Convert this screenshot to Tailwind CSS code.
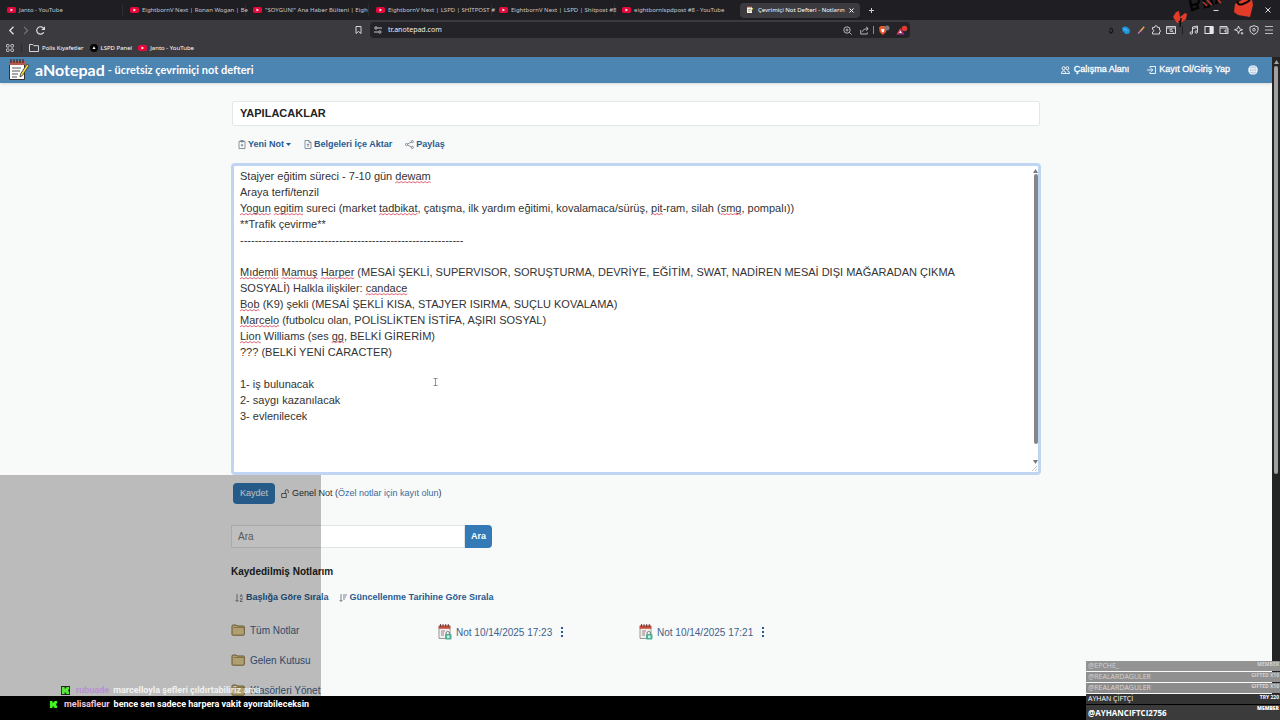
<!DOCTYPE html>
<html lang="tr">
<head>
    <meta charset="UTF-8">
    <meta name="viewport" content="width=device-width, initial-scale=1.0">
    <title>Çevrimiçi Not Defteri</title>
    <script src="https://cdn.jsdelivr.net/npm/@tailwindcss/browser@4"></script>
</head>
<body class="relative flex flex-col h-screen overflow-hidden bg-[#f8faf9] font-['Liberation_Sans',Arial,sans-serif] text-[#333]">

    <!-- Shared icons -->
    <svg class="hidden">
        <symbol id="yt" viewBox="0 0 18 12"><rect width="18" height="12" rx="3.5" fill="#e4083c"/><path d="M7 3l5 3-5 3z" fill="#fff"/></symbol>
        <symbol id="folder" viewBox="0 0 14 12"><path d="M1 2.2C1 1.4 1.400 1 2 1h3l1 1h6.500c.5 0 .8.3.8.8V10.500c0 .4-.3.700-.8.700H1.800c-.5 0-.8-.3-.8-.700z" fill="#ecd694" stroke="#8a7440"/><path d="M2.500 3.500h10.500" fill="none" stroke="#8a7440" stroke-width=".6"/></symbol>
        <symbol id="note" viewBox="0 0 14 16"><path d="M1 2h11v12.500H1z" fill="#f2efef" stroke="#857f80" stroke-width=".8"/><path d="M.700 1.500h11.600v3.300H.700z" fill="#c9503c"/><path d="M2.500 0v3M5 0v3M7.700 0v3M10.300 0v3" stroke="#5b3b38" stroke-width=".9"/><path d="M3 7h4M3 9h3M3 11h3" stroke="#9a8583"/><path d="M8 10V8.500q1.700-2.500 3.500 0V10" fill="none" stroke="#777"/><rect x="7" y="10" width="6.500" height="5.500" rx="1" fill="#4eae96"/><rect x="9" y="11.500" width="2.500" height="2.500" fill="#cdf0e5"/></symbol>
        <symbol id="kick" viewBox="0 0 10 10"><path d="M1 1h3v2h1V2h1V1h3v3H8v2h1v3H6V8H5V7H4v2H1z" fill="#42f51f"/></symbol>
    </svg>

    <!-- Browser tabs -->
    <div class="flex items-center h-5 shrink-0 bg-[#1f1e23] font-['Noto_Sans','Open_Sans',sans-serif] text-[6px] text-[#c8c8cc] whitespace-nowrap">
        <button class="flex items-center gap-[3px] flex-1 max-w-[123px] h-3 pl-[7px] border-r border-[#2d2c31]"><svg class="w-[9px] h-1.5 shrink-0"><use href="#yt"/></svg>Janto - YouTube</button>
        <button class="flex items-center gap-[3px] flex-1 max-w-[123px] h-3 pl-[7px] border-r border-[#2d2c31]"><svg class="w-[9px] h-1.5 shrink-0"><use href="#yt"/></svg>EightbornV Next | Ronan Wogan | Be</button>
        <button class="flex items-center gap-[3px] flex-1 max-w-[123px] h-3 pl-[7px] border-r border-[#2d2c31]"><svg class="w-[9px] h-1.5 shrink-0"><use href="#yt"/></svg>"SOYGUN!" Ana Haber Bülteni | Eigh</button>
        <button class="flex items-center gap-[3px] flex-1 max-w-[123px] h-3 pl-[7px] border-r border-[#2d2c31]"><svg class="w-[9px] h-1.5 shrink-0"><use href="#yt"/></svg>EightbornV Next | LSPD | SHİTPOST #</button>
        <button class="flex items-center gap-[3px] flex-1 max-w-[123px] h-3 pl-[7px] border-r border-[#2d2c31]"><svg class="w-[9px] h-1.5 shrink-0"><use href="#yt"/></svg>EightbornV Next | LSPD | Shitpost #8</button>
        <button class="flex items-center gap-[3px] flex-1 max-w-[123px] h-3 pl-[7px]"><svg class="w-[9px] h-1.5 shrink-0"><use href="#yt"/></svg>eightbornlspdpost #8 - YouTube</button>
        <button class="flex items-center gap-1 flex-1 max-w-[120px] h-[15px] ml-0.5 px-1.5 rounded bg-[#3b3b3f] text-white">
            <svg class="w-2 h-2 shrink-0" viewBox="0 0 8 8"><path d="M1 1h5v6H1z" fill="#f5f0e8"/><path d="M1 1h5" stroke="#b35342"/><path d="M2 3.500h3M2 5h2" stroke="#777" stroke-width=".6"/><path d="M7 2L4.500 6" stroke="#e0c75a"/></svg>
            <span class="flex-1 text-left">Çevrimiçi Not Defteri - Notların</span>
            <svg class="w-[5px] h-[5px] shrink-0" viewBox="0 0 5 5" stroke="#fff" stroke-width="1"><path d="M.500.500l4 4M4.500.500l-4 4"/></svg>
        </button>
        <button class="ml-2 p-px" aria-label="Yeni sekme"><svg class="w-[5px] h-[5px]" viewBox="0 0 5 5" stroke="#d0d0d4" stroke-width="1"><path d="M2.500 0v5M0 2.500h5"/></svg></button>
        <div class="flex items-center gap-5 ml-auto pr-[9px]">
            <svg class="w-1.5 h-1.5" viewBox="0 0 6 6" stroke="#ddd" stroke-width="1"><path d="M.500 3.500h5"/></svg>
            <svg class="w-1.5 h-1.5" viewBox="0 0 6 6" stroke="#ddd" stroke-width="1"><path d="M1 1h4v4H1z" fill="none"/></svg>
            <svg class="w-1.5 h-1.5" viewBox="0 0 6 6" stroke="#ddd" stroke-width="1"><path d="M.500.500l5 5M5.500.500l-5 5"/></svg>
        </div>
    </div>

    <!-- Address bar -->
    <div class="flex items-center h-5 shrink-0 bg-[#3b3b3f] text-[#d5d5d8]">
        <div class="flex items-center flex-1 pl-2 pr-2">
            <svg class="w-[9px] h-[9px]" viewBox="0 0 9 9" fill="none" stroke="#e0e0e2" stroke-width="1.300"><path d="M5.500.800L1.800 4.500l3.700 3.700"/></svg>
            <svg class="w-[9px] h-[9px] ml-1" viewBox="0 0 9 9" fill="none" stroke="#77777c" stroke-width="1.100"><path d="M3 .800l3.700 3.700L3 8.200"/></svg>
            <svg class="w-[9px] h-[9px] ml-1.5" viewBox="0 0 9 9" fill="none" stroke="#e0e0e2" stroke-width="1.200"><path d="M7.700 6.200A3.700 3.700 0 1 1 7.700 2.700M8.400.800v2.700H5.700"/></svg>
            <svg class="w-[7px] h-2 ml-auto" viewBox="0 0 7 8" fill="none" stroke="#d5d5d8"><path d="M1 .500h5v7L3.500 5.500 1 7.500z"/></svg>
        </div>
        <div class="flex items-center w-[540px] h-4 pl-1 rounded bg-[#242328]">
            <svg class="w-2 h-2 shrink-0" viewBox="0 0 8 8" fill="none" stroke="#c5c5c8"><path d="M3.500 2H8M0 6h4"/><circle cx="2" cy="2" r="1.200"/><circle cx="5.800" cy="6" r="1.200"/></svg>
            <input type="text" aria-label="Adres" value="tr.anotepad.com" class="flex-1 min-w-0 pl-1.5 bg-transparent font-['Noto_Sans',sans-serif] text-[7px] text-[#ededf0] outline-none">
            <svg class="w-[9px] h-[9px]" viewBox="0 0 9 9" fill="none" stroke="#c5c5c8" stroke-width=".9"><circle cx="4" cy="4" r="3.200"/><path d="M6.300 6.300l2.300 2.300M4 2.500v3M2.500 4h3"/></svg>
            <svg class="w-[9px] h-[9px] ml-2" viewBox="0 0 9 9" fill="none" stroke="#c5c5c8" stroke-width=".9"><path d="M.700 4v4h6.600V6.500M2.500 5.700Q3 2.700 8 2.700M6 .700l2.200 2L6 4.700"/></svg>
            <div class="w-px h-2 ml-1 bg-[#8a8a8e]"></div>
            <svg class="w-3 h-[11px] ml-1" viewBox="0 0 12 11"><path d="M1 2.500L3 1h3.500l2 1.500L8 7 4.800 10 1.700 7z" fill="#ee5a2e"/><path d="M3 4h3.500l-.7 2.500-1 1-1-1z" fill="#fff"/><circle cx="9" cy="3" r="2.500" fill="#77787c"/></svg>
            <svg class="w-3 h-[11px] ml-1.5 mr-0.5" viewBox="0 0 12 11"><path d="M4.500 3L8.500 9.500H.500z" fill="#a02f8c"/><path d="M4.500 3L.500 9.500l4-2z" fill="#ee4b35"/><path d="M4.500 5.500l1.300 2.500H3.200z" fill="#fff"/><circle cx="8.500" cy="3.500" r="2.800" fill="#dd3c30"/></svg>
        </div>
        <div class="flex items-center justify-end flex-1 gap-[5px] pl-2.5 pr-1.5">
            <svg class="w-2.5 h-2.5" viewBox="0 0 10 10"><path d="M4 2.500Q8 3 7 7L5 9 3 7z" fill="#151419"/><path d="M5 4v3" stroke="#63466f"/></svg>
            <svg class="w-2.5 h-2.5" viewBox="0 0 10 10"><path d="M1 3q2-2.500 5-1 3 1.500 3 4 0 3-3 3-2 0-3-1.500Q1 6 1 3z" fill="#1d97df"/><path d="M3 4q2 0 3 2" stroke="#76c8f4" fill="none"/></svg>
            <svg class="w-2.5 h-2.5" viewBox="0 0 10 10" stroke-width="1.600"><path d="M2 8.500L5 5.500" stroke="#c46cba"/><path d="M4.500 6l3.700-4.200" stroke="#e8a24b"/></svg>
            <svg class="w-2.5 h-2.5" viewBox="0 0 10 10" fill="none" stroke="#d5d5d8"><path d="M1.500 2.500h2Q3.500.700 5 .700t1.500 1.800h2V5q1 0 1 1t-1 1v2h-7V7q1.300 0 1.300-1.200T1.500 4.500z"/></svg>
            <svg class="w-2.5 h-2.5" viewBox="0 0 10 10" fill="none" stroke="#d5d5d8"><path d="M.500 1.500h9v7h-9zM.500 3h9"/><circle cx="5" cy="5.300" r="1.200"/><path d="M6 6.300l1.500 1"/></svg>
            <div class="w-px h-2 mx-px bg-[#1f1e23]"></div>
            <svg class="w-2.5 h-2.5" viewBox="0 0 10 10" fill="none" stroke="#d5d5d8"><path d="M3.500 8V2l5-1v6M3.500 3.500l5-1"/><circle cx="2.300" cy="8" r="1.200"/><circle cx="7.300" cy="7" r="1.200"/></svg>
            <svg class="w-2.5 h-2.5" viewBox="0 0 10 10" fill="none" stroke="#e8e8ea"><rect x="1" y="1.500" width="8" height="7"/><path d="M6 2h3v6H6z" fill="#e8e8ea"/></svg>
            <svg class="w-2.5 h-2.5" viewBox="0 0 10 10" fill="none" stroke="#d5d5d8"><path d="M8 3V1.500H1v7h8V3H1.500M9 5H6v2h3"/></svg>
            <svg class="w-2.5 h-2.5" viewBox="0 0 10 10" fill="none" stroke="#d5d5d8"><path d="M4.500 1l1 2.700L8.500 4.800l-3 1-1 3-1-3-3-1 3-1.100z"/><path d="M8 7v2.500M6.800 8.200h2.500"/></svg>
            <svg class="w-2.5 h-2.5" viewBox="0 0 10 10" fill="none" stroke="#d5d5d8"><path d="M5 .700L9 2v3.500Q8.500 8 5 9.500 1.500 8 1 5.500V2z"/><circle cx="5" cy="4.700" r="1.300"/></svg>
            <svg class="w-2.5 h-2.5" viewBox="0 0 10 10" stroke="#bdbdc0"><path d="M1 1.500h8M1 5h8M1 8.500h8"/></svg>
        </div>
    </div>

    <!-- Bookmarks -->
    <div class="flex items-center h-[17px] shrink-0 px-1.5 pb-px bg-[#3b3b3f] font-['Noto_Sans',sans-serif] text-[6px] text-white">
        <svg class="w-2 h-2" viewBox="0 0 8 8" fill="none" stroke="#d5d5d8" stroke-width=".9"><rect x=".500" y=".500" width="2.600" height="2.600" rx=".6"/><rect x="4.900" y=".500" width="2.600" height="2.600" rx=".6"/><rect x=".500" y="4.900" width="2.600" height="2.600" rx=".6"/><rect x="4.900" y="4.900" width="2.600" height="2.600" rx=".6"/></svg>
        <div class="w-px h-2 ml-[7px] bg-[#2a2a2e]"></div>
        <a href="#" class="flex items-center gap-[3px] ml-[7px]"><svg class="w-[10px] h-2" viewBox="0 0 10 8" fill="none" stroke="#d5d5d8"><path d="M.500 7.500v-7h3.300l1 1.200h4.700v5.800z"/></svg>Polis Kıyafetler</a>
        <a href="#" class="flex items-center gap-[3px] ml-1.5"><svg class="w-2 h-2" viewBox="0 0 8 8"><circle cx="4" cy="4" r="4" fill="#050505"/><path d="M4 2.300L5.500 5h-3z" fill="#fff"/></svg>LSPD Panel</a>
        <a href="#" class="flex items-center gap-[3px] ml-1.5"><svg class="w-[9px] h-1.5"><use href="#yt"/></svg>Janto - YouTube</a>
    </div>

    <div class="relative flex flex-1 min-h-0">
        <div class="flex-1 min-w-0">
            <!-- Site header -->
            <header class="flex items-center h-[26px] pl-2 pr-[14px] bg-[#4c84b2] text-white shadow-sm">
                <a href="#" class="flex items-center font-['Lato',sans-serif] font-bold">
                    <svg class="w-[22px] h-[22px]" viewBox="0 0 22 22"><path d="M1.500 3h15v17.500h-15z" fill="#fff" stroke="#333"/><path d="M1 2h16v4H1z" fill="#b65a50"/><path d="M3 0v4M6 0v4M9 0v4M12 0v4M15 0v4" stroke="#382a2c" stroke-width="1.200"/><path d="M4 9h9M4 12h8M4 15h6M4 18h5" stroke="#555"/><path d="M19 5l2 1.500-6.500 10-2.500 1.500.500-3z" fill="#e9d74a" stroke="#333" stroke-width=".8"/></svg>
                    <span class="ml-[5px] text-[16px] leading-5">aNotepad</span>
                    <span class="ml-[3px] text-[11px] leading-5">- ücretsiz çevrimiçi not defteri</span>
                </a>
                <nav class="flex items-center gap-[18px] ml-auto text-[9px] [-webkit-text-stroke:0.3px_white]">
                    <a href="#" class="flex items-center gap-1"><svg class="w-[9px] h-2" viewBox="0 0 9 8" fill="none" stroke="#fff" stroke-width=".9"><circle cx="2.600" cy="2.200" r="1.500"/><circle cx="6.300" cy="2.200" r="1.500"/><path d="M.500 7.500q0-2.700 2.100-2.700T4.700 7.500zM4.700 7.500h3.800q0-2.700-2.200-2.700"/></svg>Çalışma Alanı</a>
                    <a href="#" class="flex items-center gap-[3px]"><svg class="w-[9px] h-2" viewBox="0 0 9 8" fill="none" stroke="#fff" stroke-width=".9"><path d="M3 2V.500h5.500v7H3V6M0 4h5.500M4 2.200L5.800 4 4 5.800"/></svg>Kayıt Ol/Giriş Yap</a>
                    <a href="#" aria-label="Dil"><svg class="w-2.5 h-2.5" viewBox="0 0 10 10"><circle cx="5" cy="5" r="4.800" fill="#fff"/><path d="M5 0v10M0 5h10M1.500 2.300h7M1.500 7.700h7" stroke="#86add0" stroke-width=".5"/><ellipse cx="5" cy="5" rx="2.300" ry="4.800" fill="none" stroke="#86add0" stroke-width=".5"/></svg></a>
                </nav>
            </header>

            <main class="max-w-[810px] mx-auto pt-[18px]">
                <div class="px-px">
                    <input type="text" aria-label="Başlık" value="YAPILACAKLAR" class="block w-full h-[25px] px-[7px] pb-px border border-[#e4e7e8] rounded-xs bg-white text-[11px] font-bold text-[#222] outline-none">
                </div>

                <div class="flex items-center gap-[13px] h-[37px] pl-[7px] text-[9px] font-bold text-[#285a91]">
                    <button class="flex items-center gap-0.5"><svg class="w-2 h-[9px]" viewBox="0 0 8 9" fill="none" stroke="#596775" stroke-width=".7"><path d="M1 1.300h6v7.200H1zM2.800.500h2.400v1.400H2.800zM4 4v2.400M2.800 5.200h2.400"/></svg>Yeni Not<svg class="w-[5px] h-[3px]" viewBox="0 0 5 3" fill="#285a91"><path d="M0 0h5L2.500 3z"/></svg></button>
                    <button class="flex items-center gap-0.5"><svg class="w-2 h-[9px]" viewBox="0 0 8 9" fill="none" stroke="#596775" stroke-width=".7"><path d="M1 .500h4l2 2v6H1zM5 .500v2h2M4 7V4M2.800 5L4 3.800 5.200 5"/></svg>Belgeleri İçe Aktar</button>
                    <button class="flex items-center gap-0.5"><svg class="w-[9px] h-[9px]" viewBox="0 0 9 9" fill="none" stroke="#596775" stroke-width=".7"><circle cx="1.500" cy="4.500" r="1.100"/><circle cx="7.300" cy="1.600" r="1.100"/><circle cx="7.300" cy="7.400" r="1.100"/><path d="M2.500 4l3.700-1.900M2.500 5l3.700 1.900"/></svg>Paylaş</button>
                </div>

                <!-- Note editor -->
                <div class="relative h-[312px]">
                    <textarea id="note-text" aria-label="Not" spellcheck="false" class="block w-full h-full pt-0.5 pl-1.5 pr-4 border-3 border-[#c0d5f2] rounded bg-white text-[11px] leading-4 text-[#333] resize-none overflow-hidden outline-none">Stajyer eğitim süreci - 7-10 gün dewam
Araya terfi/tenzil
Yogun egitim sureci (market tadbikat, çatışma, ilk yardım eğitimi, kovalamaca/sürüş, pit-ram, silah (smg, pompalı))
**Trafik çevirme**
-------------------------------------------------------------

Mıdemli Mamuş Harper (MESAİ ŞEKLİ, SUPERVISOR, SORUŞTURMA, DEVRİYE, EĞİTİM, SWAT, NADİREN MESAİ DIŞI MAĞARADAN ÇIKMA
SOSYALİ) Halkla ilişkiler: candace
Bob (K9) şekli (MESAİ ŞEKLİ KISA, STAJYER ISIRMA, SUÇLU KOVALAMA)
Marcelo (futbolcu olan, POLİSLİKTEN İSTİFA, AŞIRI SOSYAL)
Lion Williams (ses gg, BELKİ GİRERİM)
??? (BELKİ YENİ CARACTER)

1- iş bulunacak
2- saygı kazanılacak
3- evlenilecek</textarea>
                    <svg id="squiggles" class="absolute inset-0 w-full h-full pointer-events-none">
                        <defs><pattern id="wave" width="4" height="3" patternUnits="userSpaceOnUse"><path d="M0 2l2-1.500L4 2" fill="none" stroke="#dc5266" stroke-width=".9"/></pattern></defs>
                    </svg>
                    <div class="absolute top-1.5 right-[3px] bottom-2 flex flex-col items-center w-[5px] pointer-events-none">
                        <svg class="w-[5px] h-1" viewBox="0 0 5 4" fill="#77787c"><path d="M2.500 0L5 4H0z"/></svg>
                        <div class="w-1 h-[270px] mt-px rounded-full bg-[#85868a]"></div>
                        <svg class="w-[5px] h-1 mt-4" viewBox="0 0 5 4" fill="#77787c"><path d="M0 0h5L2.500 4z"/></svg>
                    </div>
                    <svg class="absolute right-1 bottom-1 w-[5px] h-[5px]" viewBox="0 0 5 5" stroke="#aaa" stroke-width=".7"><path d="M0 5l5-5M3 5l2-2"/></svg>
                    <svg class="absolute top-[215px] left-[202px] w-[5px] h-2" viewBox="0 0 5 8" fill="none" stroke="#666" stroke-width=".7"><path d="M.500.500h4M.500 7.500h4M2.500.500v7"/></svg>
                </div>

                <div class="flex items-center gap-1.5 mt-2 pl-0.5 text-[9px]">
                    <button class="h-[21px] px-[7px] rounded-sm bg-[#337ab7] text-white">Kaydet</button>
                    <p class="flex items-center gap-[3px]"><svg class="w-2 h-[9px]" viewBox="0 0 8 9" fill="none" stroke="#444" stroke-width=".8"><path d="M.700 4.500h4.600v4H.700zM4.300 4.500V2.300Q4.400.600 5.800.600T7.300 2.300V4"/></svg><span>Genel Not (<a href="#" class="text-[#39699a]">Özel notlar için kayıt olun</a>)</span></p>
                </div>

                <form class="flex w-[261px] mt-[21px]">
                    <input type="text" placeholder="Ara" aria-label="Ara" class="flex-1 min-w-0 h-[23px] px-1.5 border border-[#e1e4e6] bg-white text-[10px] placeholder:text-[#777] outline-none">
                    <button type="button" class="h-[23px] px-1.5 rounded-r-sm bg-[#337ab7] text-[9px] font-bold text-white">Ara</button>
                </form>

                <h2 class="mt-4 text-[10px] leading-4 font-bold text-[#222]">Kaydedilmiş Notlarım</h2>

                <div class="flex items-center gap-2.5 h-3 mt-3 pl-1 text-[9px] font-bold text-[#285a91]">
                    <a href="#" class="flex items-center gap-[3px]"><svg class="w-2 h-2" viewBox="0 0 8 8" fill="none" stroke="#596775" stroke-width=".8"><path d="M2 0v7.300M.500 6L2 7.500 3.500 6M5 3.300L6.300.500l1.200 2.800M5 4.800h2.500L5 7.500h2.500"/></svg>Başlığa Göre Sırala</a>
                    <a href="#" class="flex items-center gap-[3px]"><svg class="w-2 h-2" viewBox="0 0 8 8" fill="none" stroke="#596775" stroke-width=".8"><path d="M2 0v7.300M.500 6L2 7.500 3.500 6M4 1h4M4 3h3M4 5h2"/></svg>Güncellenme Tarihine Göre Sırala</a>
                </div>

                <div class="flex mt-[11px] text-[10px] text-[#3f618e]">
                    <ul class="w-[207px]">
                        <li><a href="#" class="flex items-center gap-[5px] h-[30px]"><svg class="w-[14px] h-3"><use href="#folder"/></svg>Tüm Notlar</a></li>
                        <li><a href="#" class="flex items-center gap-[5px] h-[30px]"><svg class="w-[14px] h-3"><use href="#folder"/></svg>Gelen Kutusu</a></li>
                        <li><a href="#" class="flex items-center gap-[5px] h-[30px]"><svg class="w-[14px] h-3"><use href="#folder"/></svg>Klasörleri Yönet</a></li>
                    </ul>
                    <div class="flex items-center gap-1 w-[201px] h-[34px]">
                        <svg class="w-[14px] h-4"><use href="#note"/></svg><a href="#">Not 10/14/2025 17:23</a>
                        <button class="ml-1" aria-label="Seçenekler"><svg class="w-1 h-2.5" viewBox="0 0 4 10" fill="#285a91"><path d="M1 0h2v2H1zM1 4h2v2H1zM1 8h2v2H1z"/></svg></button>
                    </div>
                    <div class="flex items-center gap-1 w-[201px] h-[34px]">
                        <svg class="w-[14px] h-4"><use href="#note"/></svg><a href="#">Not 10/14/2025 17:21</a>
                        <button class="ml-1" aria-label="Seçenekler"><svg class="w-1 h-2.5" viewBox="0 0 4 10" fill="#285a91"><path d="M1 0h2v2H1zM1 4h2v2H1zM1 8h2v2H1z"/></svg></button>
                    </div>
                </div>
            </main>
        </div>

        <!-- Page scrollbar -->
        <div class="flex flex-col items-center w-2 bg-[#242424]">
            <svg class="w-[5px] h-1 mt-[3px]" viewBox="0 0 5 4" fill="#a5a5a5"><path d="M2.500 0L5 4H0z"/></svg>
            <div class="w-1 h-[408px] mt-0.5 rounded-full bg-[#a0a0a0]"></div>
        </div>

        <!-- Dimmed chat area -->
        <div class="absolute left-0 bottom-0 w-[321px] h-[221px] bg-black/25"></div>
    </div>

    <div class="h-6 shrink-0 bg-black"></div>

    <!-- Chat -->
    <div class="absolute left-[49px] bottom-[9px] flex flex-col gap-px font-['Roboto',sans-serif] text-[9px] leading-[13px] font-bold text-white whitespace-nowrap">
        <p class="flex items-center pl-3 opacity-80"><svg class="w-[9px] h-[9px] bg-black"><use href="#kick"/></svg><span class="ml-1.5 text-[#b887dc]">rubuade</span><span class="ml-1">marcelloyla şefleri çıldırtabiliriz ama</span></p>
        <p class="flex items-center"><svg class="w-[9px] h-[9px]"><use href="#kick"/></svg><span class="ml-1.5 text-[#f6c3d4]">melisafleur</span><span class="ml-1">bence sen sadece harpera vakit ayoırabileceksin</span></p>
    </div>

    <!-- Supporters -->
    <div class="absolute right-0 bottom-0 flex flex-col gap-px w-[194px] font-['Open_Sans',sans-serif] text-[7px] leading-[10px] text-white">
        <div class="flex justify-between h-2.5 pl-0.5 pr-px bg-[#939393] text-[#d2d2d2]"><span>@EPCHE_</span><b class="text-[5px] leading-[7px]">MEMBER</b></div>
        <div class="flex justify-between h-2.5 pl-0.5 pr-px bg-[#909090] text-[#d2d2d2]"><span>@REALARDAGULER</span><b class="text-[5px] leading-[7px]">GIFTED X10</b></div>
        <div class="flex justify-between h-2.5 pl-0.5 pr-px bg-[#8c8c8c] text-[#d8d8d8]"><span>@REALARDAGULER</span><b class="text-[5px] leading-[7px]">GIFTED X10</b></div>
        <div class="flex justify-between h-2.5 pl-0.5 pr-px bg-[#343434]"><span>AYHAN ÇİFTÇİ</span><b class="text-[5px] leading-[7px]">TRY 220</b></div>
        <div class="flex justify-between h-[15px] pl-0.5 pr-px bg-[#3b3b3b] font-bold"><span class="text-[8px] leading-[15px]">@AYHANCIFTCI2756</span><b class="text-[5px] leading-[7px]">MEMBER</b></div>
    </div>

    <!-- Stream sticker -->
    <svg class="absolute top-0 right-[16px] w-[92px] h-7" viewBox="0 0 92 28">
        <path d="M1 17l3-5 3-1 1 6 5-4 2 1-1 5-5 4H5z" fill="#e23c29"/>
        <path d="M9 18l-1 9M7 21l2 3" stroke="#111" stroke-width="1.500"/>
        <path d="M18 0l2 10 6-2-1-4-5 1M27 0l-1 4M32 0l1 7 5-1M39 0l2 5M45 0l-1 4" fill="none" stroke="#050505" stroke-width="2.500"/>
        <path d="M31 2l4 4M35 0l5 5M46 0l3 3" fill="none" stroke="#c83426" stroke-width="1.500"/>
        <path d="M63 4l7-4 10 0 1 5-3 12-12-2-4-3z" fill="#e23c29"/>
        <path d="M65 1q1 5 6 3t7-4" fill="none" stroke="#080808" stroke-width="2"/>
    </svg>

    <script>
        const noteText = document.getElementById('note-text');
        const squiggles = document.getElementById('squiggles');

        // Keep these in step with the textarea's classes
        const FONT = '11px "Liberation Sans", Arial, sans-serif';
        const LINE_HEIGHT = 16;
        const LEFT = 9;
        const TOP = 5;

        // Words the spell checker does not know, by line
        const misspelled = [
            [0, 'dewam'],
            [2, 'Yogun'], [2, 'egitim'], [2, 'tadbikat'], [2, 'pit'], [2, 'smg'],
            [6, 'Mıdemli'], [6, 'Mamuş'], [6, 'Harper'],
            [7, 'candace'],
            [8, 'Bob'], [9, 'Marcelo'], [10, 'Lion'], [10, 'gg']
        ];

        const lines = noteText.value.split('\n');
        const ctx = document.createElement('canvas').getContext('2d');
        ctx.font = FONT;

        misspelled.forEach(([line, word]) => {
            const before = lines[line].slice(0, lines[line].indexOf(word));
            const x = LEFT + ctx.measureText(before).width;
            const y = TOP + LINE_HEIGHT * (line + 1) - 3;
            const rect = document.createElementNS('http://www.w3.org/2000/svg', 'rect');
            rect.setAttribute('width', ctx.measureText(word).width);
            rect.setAttribute('height', 3);
            rect.setAttribute('fill', 'url(#wave)');
            // Translating keeps the pattern lined up with the start of the word
            rect.setAttribute('transform', `translate(${x} ${y})`);
            squiggles.appendChild(rect);
        });
    </script>

</body>
</html>
